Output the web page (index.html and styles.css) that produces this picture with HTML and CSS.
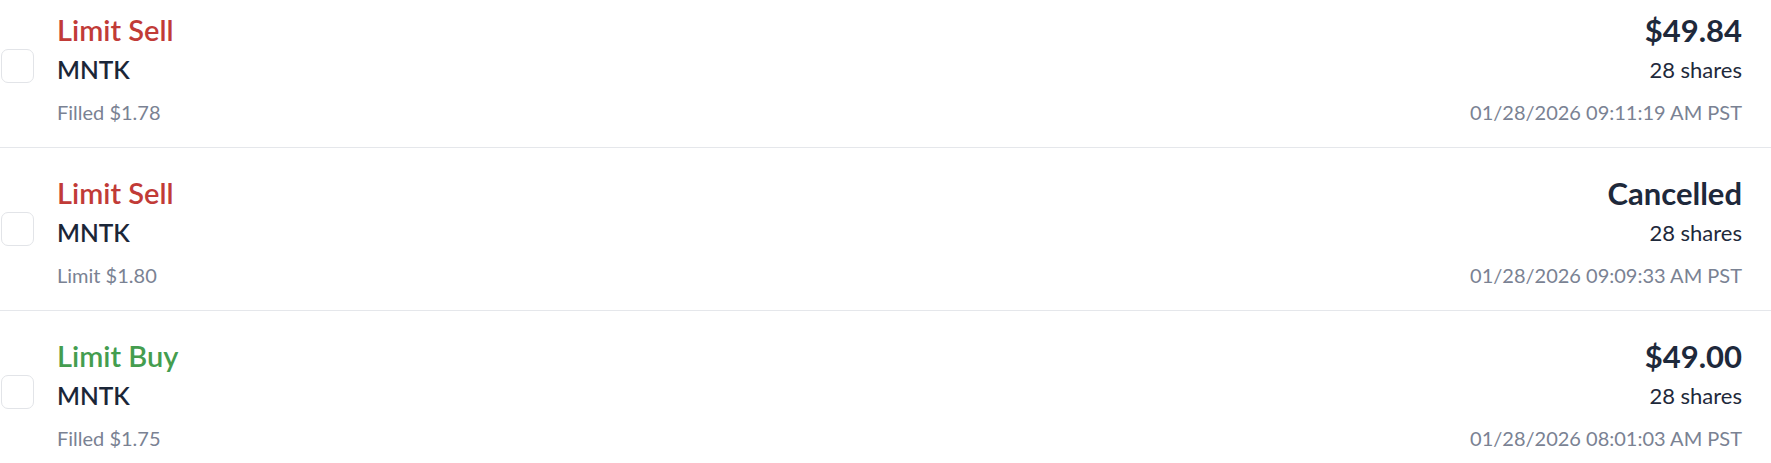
FILE: index.html
```html
<!DOCTYPE html>
<html lang="en">

<head>
    <meta charset="UTF-8">
    <meta name="viewport" content="width=device-width, initial-scale=1.0">
    <title>Order History</title>
    <link rel="stylesheet" href="styles.css">
</head>

<body>

    <ul class="orders">
        <li class="order">
            <span class="check"></span>
            <div class="order-info">
                <div class="order-type sell">Limit Sell</div>
                <div class="order-symbol">MNTK</div>
                <div class="order-detail">Filled $1.78</div>
            </div>
            <div class="order-meta">
                <div class="order-total">$49.84</div>
                <div class="order-qty">28 shares</div>
                <div class="order-time">01/28/2026 09:11:19 AM PST</div>
            </div>
        </li>
        <li class="order">
            <span class="check"></span>
            <div class="order-info">
                <div class="order-type sell">Limit Sell</div>
                <div class="order-symbol">MNTK</div>
                <div class="order-detail">Limit $1.80</div>
            </div>
            <div class="order-meta">
                <div class="order-total">Cancelled</div>
                <div class="order-qty">28 shares</div>
                <div class="order-time">01/28/2026 09:09:33 AM PST</div>
            </div>
        </li>
        <li class="order">
            <span class="check"></span>
            <div class="order-info">
                <div class="order-type buy">Limit Buy</div>
                <div class="order-symbol">MNTK</div>
                <div class="order-detail">Filled $1.75</div>
            </div>
            <div class="order-meta">
                <div class="order-total">$49.00</div>
                <div class="order-qty">28 shares</div>
                <div class="order-time">01/28/2026 08:01:03 AM PST</div>
            </div>
        </li>
    </ul>

</body>

</html>
```

FILE: styles.css
```css
* {
    margin: 0;
    padding: 0;
    box-sizing: border-box;
}

body {
    font-family: 'Lato', 'Inter', sans-serif;
    background-color: #fff;
    color: #1e293b;
    overflow: hidden;
}

.orders {
    list-style: none;
    margin-top: -15px;
}

.order {
    display: flex;
    align-items: center;
    height: 163px;
    padding: 0 29px 0 1px;
    border-bottom: 1px solid #e5e7eb;
}

.check {
    width: 33px;
    height: 34px;
    border: 1px solid #e2e4e8;
    border-radius: 7px;
    flex-shrink: 0;
    margin-right: 23px;
}

.order-info,
.order-meta {
    display: flex;
    flex-direction: column;
    padding-top: 12px;
}

.order-meta {
    margin-left: auto;
    align-items: flex-end;
}

.order-type,
.order-total {
    line-height: 38px;
}

.order-type {
    font-size: 29px;
    font-weight: 600;
}

.order-type.sell {
    color: #c13b37;
}

.order-type.buy {
    color: #449d4f;
}

.order-total {
    font-size: 31px;
    font-weight: 700;
    color: #1e293b;
}

.order-symbol,
.order-qty {
    line-height: 41px;
}

.order-symbol {
    font-size: 24.5px;
    font-weight: 600;
    color: #1b2638;
}

.order-qty {
    font-size: 22px;
}

.order-detail,
.order-time {
    font-size: 20px;
    line-height: 44px;
    color: #7a8293;
}
```
